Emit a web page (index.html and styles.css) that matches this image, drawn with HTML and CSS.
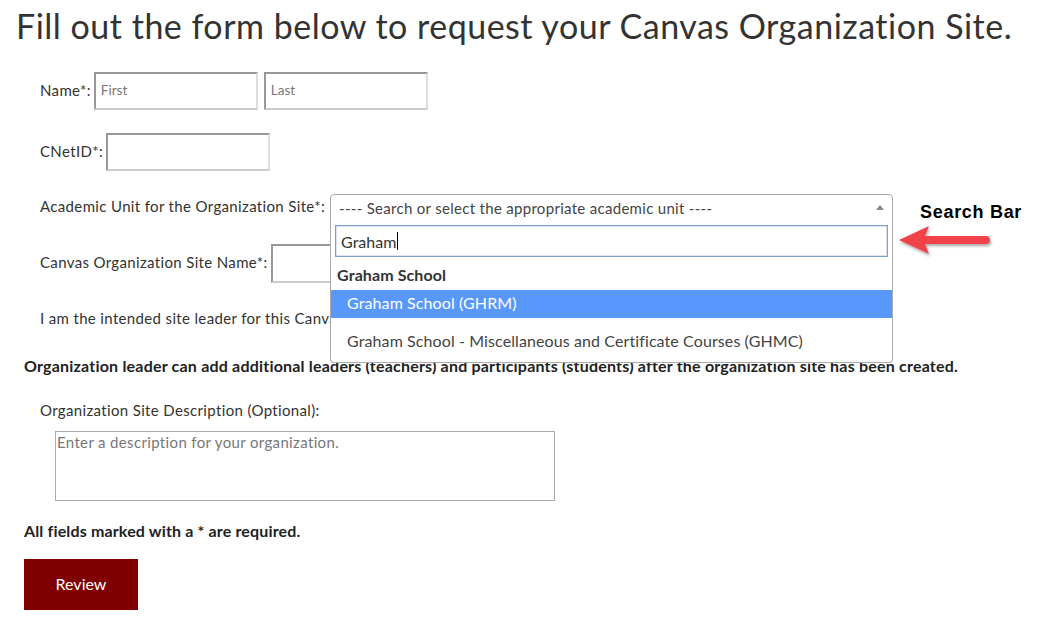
FILE: index.html
```html
<!DOCTYPE html>
<html>
<head>
<meta charset="utf-8">
<link rel="stylesheet" href="styles.css">
</head>
<body>
<div class="page">
  <h1 class="title">Fill out the form below to request your Canvas Organization Site.</h1>
  <div class="form">
    <div class="row row-name">
      <span class="label">Name*:</span>
      <div class="input w164 ph">First</div>
      <div class="input w164 ph gap6">Last</div>
    </div>
    <div class="row row-cnet">
      <span class="label">CNetID*:</span>
      <div class="input w164"></div>
    </div>
    <div class="row row-unit">
      <span class="label">Academic Unit for the Organization Site*:</span>
      <div class="select-wrap">
        <div class="select">
          <span>---- Search or select the appropriate academic unit ----</span>
          <span class="caret"></span>
        </div>
        <div class="dropdown">
          <div class="search"><span>Graham</span><span class="cursor"></span></div>
          <div class="group">Graham School</div>
          <div class="option active">Graham School (GHRM)</div>
          <div class="option second">Graham School - Miscellaneous and Certificate Courses (GHMC)</div>
        </div>
      </div>
    </div>
    <div class="row row-site">
      <span class="label">Canvas Organization Site Name*:</span>
      <div class="input w164 h39"></div>
    </div>
    <div class="row row-leader">
      <span class="label clip">I am the intended site leader for this Canvas Organization Site*:</span>
    </div>
  </div>
  <p class="note">Organization leader can add additional leaders (teachers) and participants (students) after the organization site has been created.</p>
  <div class="desc">
    <div class="label">Organization Site Description (Optional):</div>
    <div class="textarea">Enter a description for your organization.</div>
  </div>
  <p class="req">All fields marked with a * are required.</p>
  <div class="btn">Review</div>
</div>
<div class="callout">
  <span class="callout-text">Search Bar</span>
  <svg class="arrow" width="100" height="36" viewBox="0 0 100 36">
    <defs>
      <filter id="sh" x="-20%" y="-40%" width="140%" height="180%">
        <feDropShadow dx="1" dy="2" stdDeviation="1.5" flood-color="#000" flood-opacity="0.35"/>
      </filter>
    </defs>
    <g filter="url(#sh)">
      <path d="M4 17 L34 3 L30 13 L91 13 Q95 13 95 17 Q95 21 91 21 L30 21 L34 31 Z" fill="#f0434a"/>
    </g>
  </svg>
</div>
</body>
</html>
```
FILE: styles.css
```css
html, body {
  margin: 0;
  padding: 0;
  background: #fff;
}
body {
  font-family: Lato, "Open Sans", sans-serif;
  color: #333;
  width: 1045px;
  height: 618px;
  overflow: hidden;
  position: relative;
}
.page {
  padding: 0 0 0 24px;
}
.title {
  margin: 0;
  padding-top: 6px;
  margin-left: -8px;
  font-weight: 400;
  font-size: 34px;
  line-height: 40px;
  color: #333;
  letter-spacing: 0.5px;
  white-space: nowrap;
}
.form {
  padding-left: 16px;
  margin-top: 26px;
}
.row {
  display: flex;
  align-items: center;
}
.label {
  font-size: 15px;
  letter-spacing: 0.35px;
  color: #333;
  white-space: nowrap;
  margin-right: 3px;
}
.row .label {
  padding-bottom: 3px;
}
.row .label.clip {
  display: block;
  width: 290px;
  overflow: hidden;
  padding-bottom: 0;
  line-height: 18px;
}
.input {
  box-sizing: border-box;
  height: 38px;
  border: 2px solid;
  border-color: #999 #ddd #ccc #999;
  background: #fff;
  font-size: 13.5px;
  display: flex;
  align-items: center;
  padding-left: 5px;
  padding-bottom: 2px;
}
.ph { color: #777; }
.w164 { width: 164px; }
.h39 { height: 39px; }
.gap6 { margin-left: 6px; }
.row-cnet { margin-top: 23px; }
.row-unit { margin-top: 23px; height: 27px; }
.row-site { margin-top: 23px; }
.row-leader { margin-top: 26px; }
.select-wrap {
  position: relative;
  width: 563px;
  height: 27px;
  margin-left: 2px;
}
.select {
  box-sizing: border-box;
  height: 28px;
  border: 1px solid #aaa;
  border-radius: 4px 4px 0 0;
  display: flex;
  align-items: center;
  justify-content: space-between;
  padding: 0 8px 1px 8px;
  font-size: 15px;
  letter-spacing: 0.3px;
  color: #444;
  background: #fff;
}
.caret {
  width: 0;
  height: 0;
  border-left: 4px solid transparent;
  border-right: 4px solid transparent;
  border-bottom: 5px solid #888;
}
.dropdown {
  position: absolute;
  left: 0;
  top: 27px;
  width: 563px;
  box-sizing: border-box;
  border: 1px solid #aaa;
  border-top: none;
  border-radius: 0 0 4px 4px;
  background: #fff;
  z-index: 5;
  padding-bottom: 4px;
}
.search {
  box-sizing: border-box;
  margin: 4px 4px 0 4px;
  height: 32px;
  border: 1px solid #7f9fd4;
  box-shadow: inset 0 0 0 0.5px #b9c9e8;
  display: flex;
  align-items: center;
  padding-left: 5px;
  font-size: 16px;
  color: #333;
}
.cursor {
  display: inline-block;
  width: 1px;
  height: 18px;
  background: #000;
  margin-left: 1px;
}
.group {
  font-weight: 700;
  font-size: 16px;
  letter-spacing: 0.1px;
  color: #333;
  padding: 8px 6px 0 6px;
  box-sizing: border-box;
  height: 33px;
}
.option {
  box-sizing: border-box;
  height: 28px;
  display: flex;
  align-items: center;
  padding-left: 16px;
  padding-bottom: 3px;
  font-size: 16px;
  letter-spacing: 0.1px;
  color: #444;
}
.option.active {
  background: #5897fb;
  color: #fff;
}
.option.second {
  height: 40px;
  padding-top: 5px;
  padding-bottom: 1px;
}
.note {
  margin: 30px 0 0 0;
  font-size: 16px;
  letter-spacing: 0.2px;
  font-weight: 700;
  color: #222;
  line-height: 18px;
  white-space: nowrap;
}
.desc {
  padding-left: 16px;
  margin-top: 26px;
}
.desc .label {
  line-height: 18px;
}
.textarea {
  box-sizing: border-box;
  margin-top: 12px;
  margin-left: 15px;
  width: 500px;
  height: 70px;
  border: 1px solid #aaa;
  font-size: 15px;
  letter-spacing: 0.35px;
  color: #777;
  padding: 1px 1px;
}
.req {
  margin: 21px 0 0 0;
  font-size: 16px;
  letter-spacing: 0.15px;
  font-weight: 700;
  color: #222;
  line-height: 18px;
}
.btn {
  margin-top: 19px;
  width: 114px;
  height: 51px;
  background: #800000;
  color: #fff;
  font-size: 16px;
  display: flex;
  align-items: center;
  justify-content: center;
  padding-bottom: 2px;
  box-sizing: border-box;
}
.callout {
  position: absolute;
  left: 895px;
  top: 202px;
  width: 150px;
  height: 70px;
}
.callout-text {
  position: absolute;
  left: 25px;
  top: 0;
  font-family: "Liberation Sans", Arial, sans-serif;
  font-weight: 700;
  font-size: 18px;
  letter-spacing: 0.7px;
  color: #000;
  white-space: nowrap;
}
.arrow {
  position: absolute;
  left: 0;
  top: 21px;
}
```
